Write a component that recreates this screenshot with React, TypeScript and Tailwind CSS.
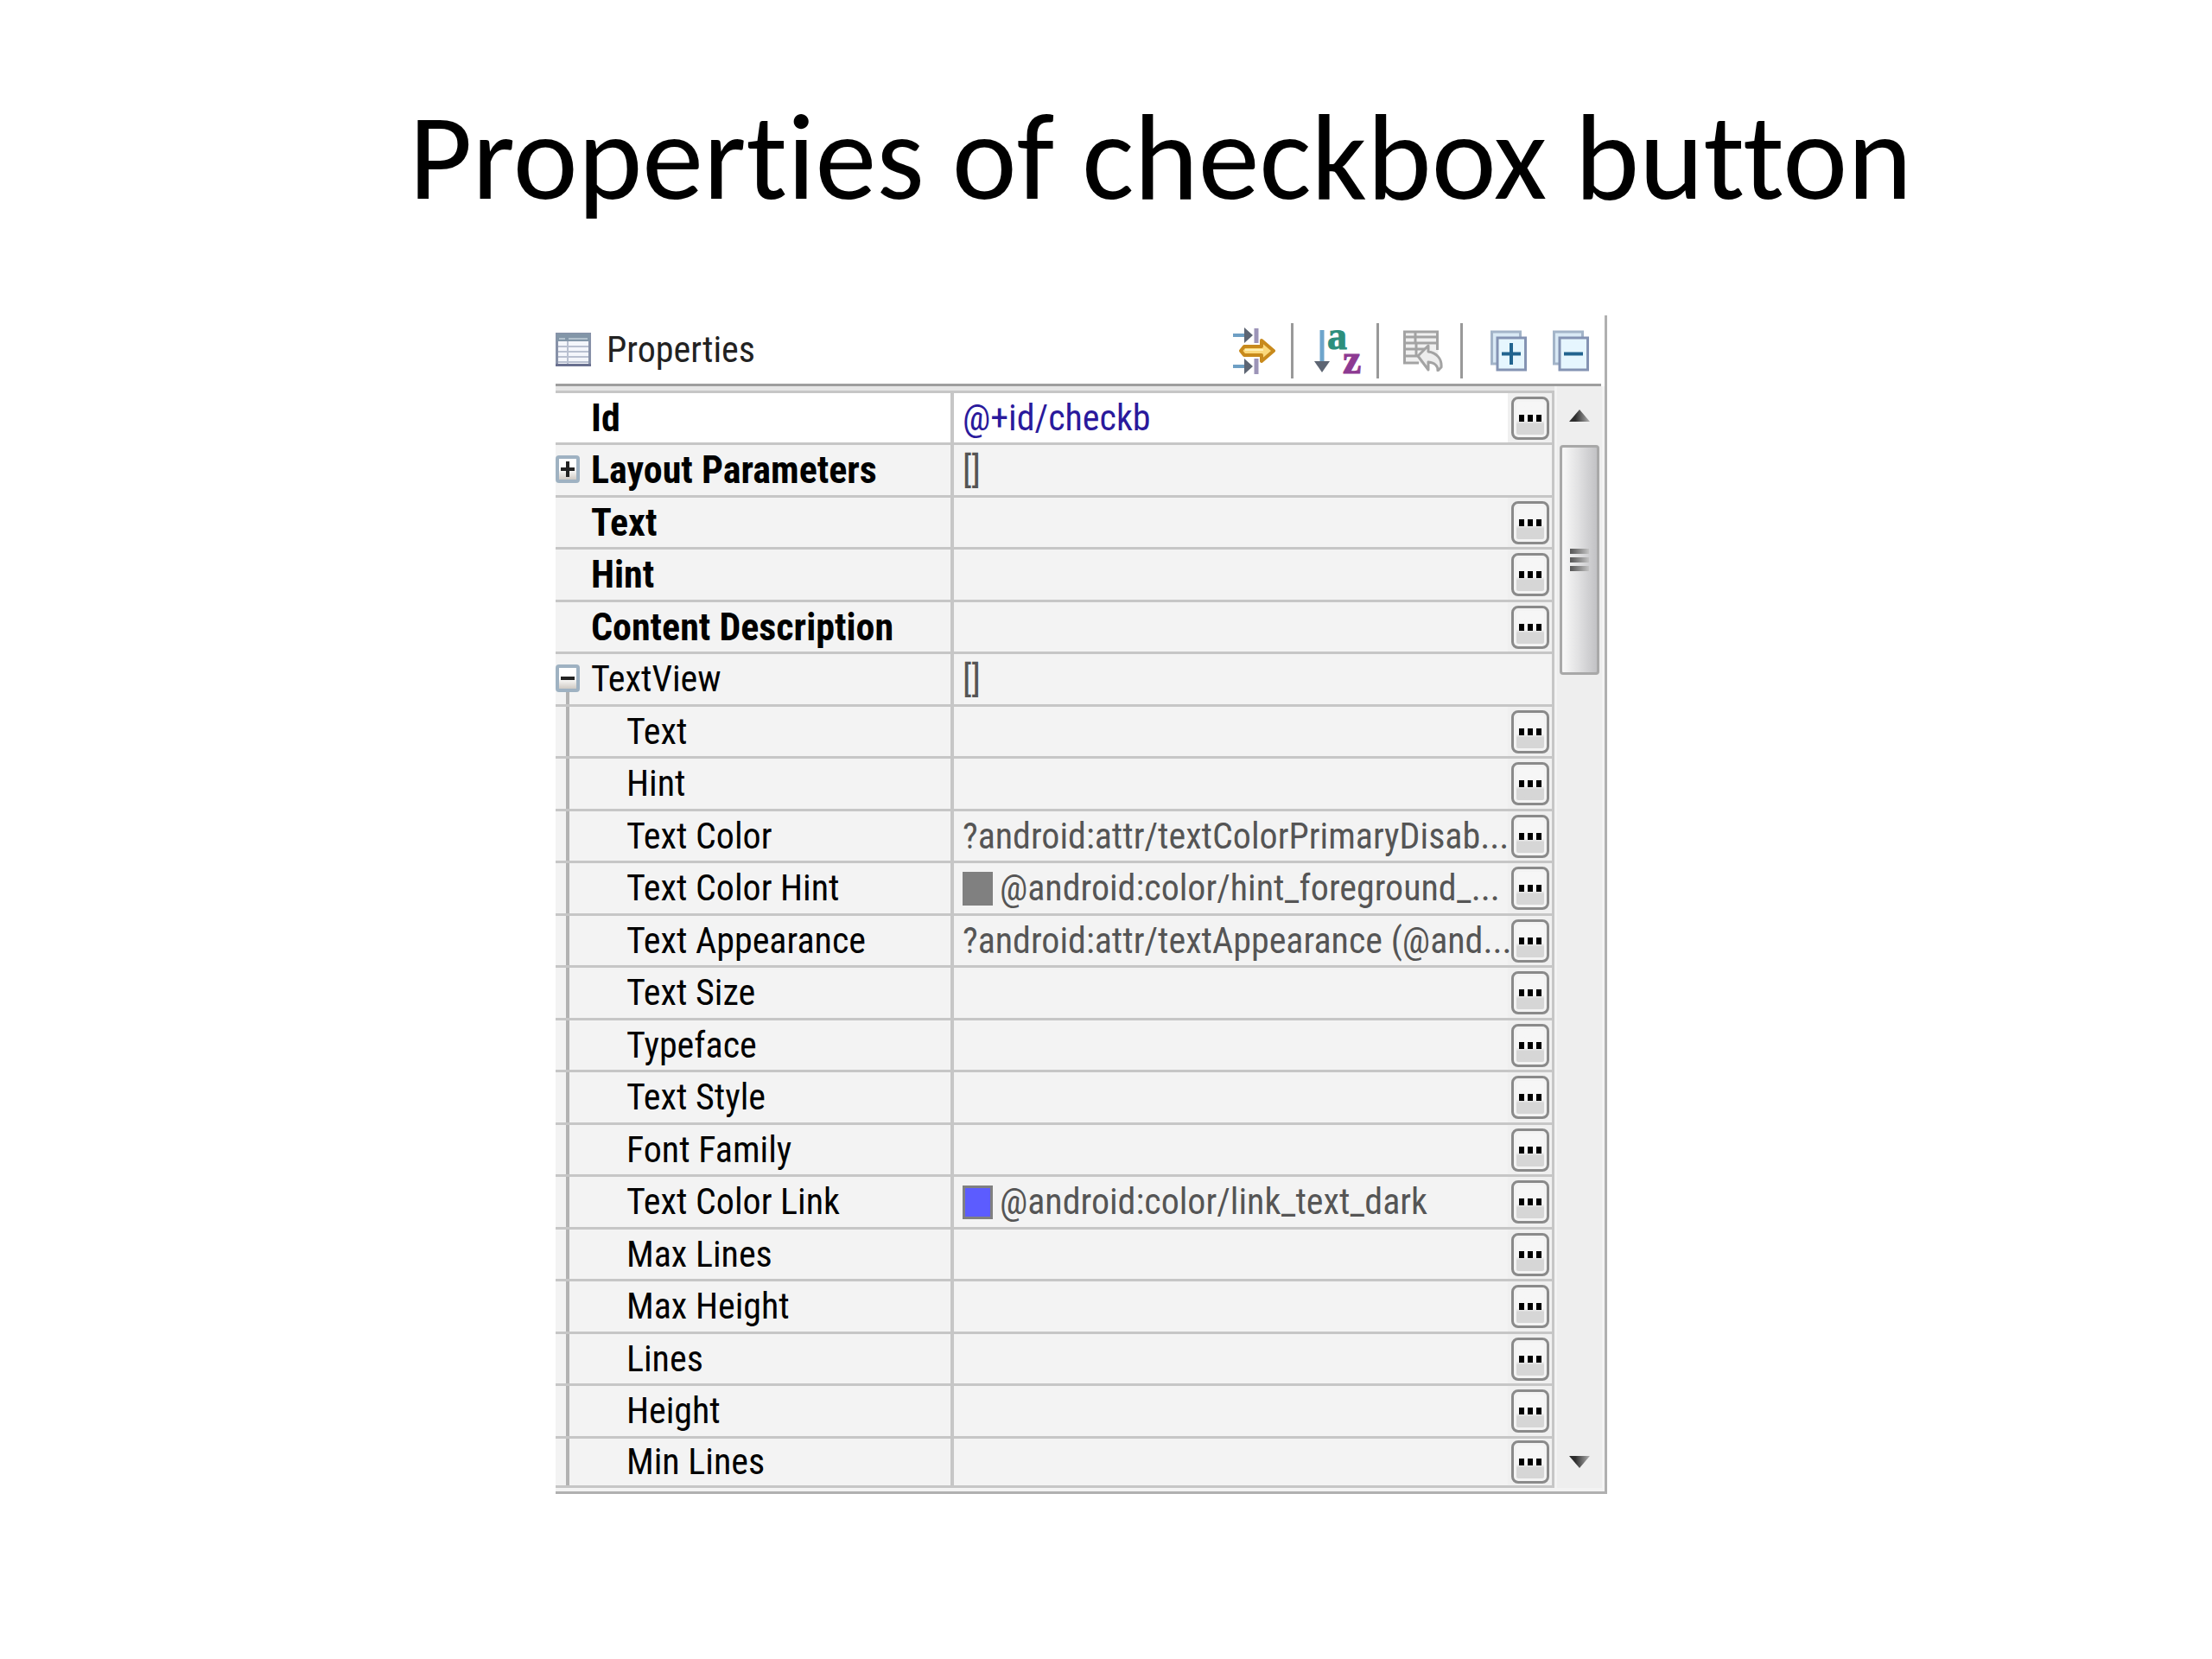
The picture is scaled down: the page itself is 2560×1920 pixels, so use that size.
import React, { useState } from 'react';

interface Property {
    name: string;
    value?: string;
    level?: number;
    bold?: boolean;
    swatch?: 'gray' | 'blue';
    edited?: boolean;
    expand?: 'plus' | 'minus';
}

const properties: Property[] = [
    { name: 'Id', value: '@+id/checkb', bold: true, edited: true },
    { name: 'Layout Parameters', value: '[]', bold: true, expand: 'plus' },
    { name: 'Text', bold: true },
    { name: 'Hint', bold: true },
    { name: 'Content Description', bold: true },
    { name: 'TextView', value: '[]', expand: 'minus' },
    { name: 'Text', level: 1 },
    { name: 'Hint', level: 1 },
    { name: 'Text Color', level: 1, value: '?android:attr/textColorPrimaryDisab...' },
    { name: 'Text Color Hint', level: 1, value: '@android:color/hint_foreground_...', swatch: 'gray' },
    { name: 'Text Appearance', level: 1, value: '?android:attr/textAppearance (@and...' },
    { name: 'Text Size', level: 1 },
    { name: 'Typeface', level: 1 },
    { name: 'Text Style', level: 1 },
    { name: 'Font Family', level: 1 },
    { name: 'Text Color Link', level: 1, value: '@android:color/link_text_dark', swatch: 'blue' },
    { name: 'Max Lines', level: 1 },
    { name: 'Max Height', level: 1 },
    { name: 'Lines', level: 1 },
    { name: 'Height', level: 1 },
    { name: 'Min Lines', level: 1 },
];

const TableIcon = () => (
    <svg width="41" height="39" viewBox="0 0 41 39" aria-hidden="true">
        <rect x="1.5" y="1.5" width="38" height="36" fill="#f4f6fb" stroke="#8791a8" strokeWidth="3" />
        <rect x="1" y="1" width="39" height="9" fill="#8396a8" />
        <path d="M4 7h7M15 7h22" stroke="#b4c2ce" strokeWidth="2" />
        <path d="M3 16h35M3 22h35M3 28h35M3 34h35" stroke="#b9c0d0" strokeWidth="2" />
        <path d="M14 10v26" stroke="#b9c0d0" strokeWidth="2" />
        <path d="M0 37.5h41" stroke="#69708f" strokeWidth="3" />
    </svg>
);

const FilterIcon = () => (
    <svg width="50" height="54" viewBox="0 0 50 54" aria-hidden="true">
        <path d="M1 9h14M1 45h14" stroke="#6e9fc4" strokeWidth="4" />
        <path d="M14 0l10 9-10 9zM14 36l10 9-10 9z" fill="#5d6573" />
        <path d="M28 1v17M28 36v18" stroke="#9c94b8" strokeWidth="5" />
        <path d="M14 22h20v-7l14 12-14 12v-7H14l-4-5z" fill="#fbd97c" stroke="#c88a1c" strokeWidth="4" strokeLinejoin="round" />
        <path d="M15 26h21" stroke="#fff0b5" strokeWidth="2" />
    </svg>
);

const SortIcon = () => (
    <svg width="54" height="56" viewBox="0 0 54 56" className="overflow-visible" aria-hidden="true">
        <path d="M9 4v38" stroke="#6ea5cc" strokeWidth="5" />
        <path d="M0 40h18l-9 13z" fill="#5d6573" />
        <text x="15" y="26" fontSize="46" className="font-['Liberation_Serif',serif] font-bold" fill="#2c8f7c" stroke="#2c8f7c">a</text>
        <text x="33" y="54" fontSize="48" className="font-['Liberation_Serif',serif] font-bold" fill="#8d3a92" stroke="#8d3a92">z</text>
    </svg>
);

const RestoreIcon = () => (
    <svg width="46" height="48" viewBox="0 0 46 48" aria-hidden="true">
        <rect x="1.5" y="2.5" width="39" height="36" fill="#f0f0f0" />
        <path d="M0 2h41M1.5 1v38M39.5 1v22M0 8h41M0 15h41M2 22h28M2 30h16M0 38h18M14 2v13M15 15v14" stroke="#a3a3a3" strokeWidth="3" fill="none" />
        <path d="M17 30l12-12v7c9 1 16 8 15 18l-4 4c0-6-3-9-11-10v9z" fill="#ededed" stroke="#a3a3a3" strokeWidth="3" strokeLinejoin="round" />
    </svg>
);

const StackIcon: React.FC<{ plus?: boolean }> = ({ plus }) => (
    <svg width="42" height="48" viewBox="0 0 42 48" aria-hidden="true">
        <rect x="1.5" y="2" width="33" height="37" fill="#d9e9f5" stroke="#a3b4c8" strokeWidth="3" />
        <rect x="8" y="9" width="32.5" height="37" fill="#e6f6fe" stroke="#8493b3" strokeWidth="3" />
        <path d="M13 27.5h22" stroke="#22648f" strokeWidth="4" />
        {plus && <path d="M24 15v25" stroke="#22648f" strokeWidth="4" />}
    </svg>
);

const ArrowIcon: React.FC<{ down?: boolean }> = ({ down }) => (
    <svg width="24" height="14" viewBox="0 0 24 14" aria-hidden="true">
        <defs>
            <linearGradient id="arrow" x1="0" x2="1">
                <stop offset="0.3" stopColor="#2d2d2d" />
                <stop offset="1" stopColor="#b4b4b4" />
            </linearGradient>
        </defs>
        <path d={down ? 'M0 0h24L12 14z' : 'M0 14h24L12 0z'} fill="url(#arrow)" />
    </svg>
);

const Separator = () => <span className="w-[3px] h-16 bg-[#999999]" />;

const Expander: React.FC<{ kind: 'plus' | 'minus' }> = ({ kind }) => {
    const [open, setOpen] = useState(kind === 'minus');
    return (
        <button
            type="button"
            aria-label="Toggle group"
            aria-expanded={open}
            onClick={() => setOpen(!open)}
            className="block w-7 h-8 rounded-sm border-4 border-[#9fb2c2] bg-linear-to-b from-white from-50% to-[#cfcac4]"
        >
            <svg width="20" height="24" viewBox="0 0 20 24" aria-hidden="true">
                <path d="M2 12h16" stroke="#222222" strokeWidth="4" />
                {!open && <path d="M10 3v18" stroke="#222222" strokeWidth="4" />}
            </svg>
        </button>
    );
};

const PropertyRow: React.FC<{ item: Property }> = ({ item }) => {
    const line = 'border-b-3 border-[#c6c6c6]';
    return (
        <tr className={`h-[60px] even:h-[61px] last:h-[57px] ${item.edited ? 'bg-white' : 'bg-[#f3f3f3]'}`}>
            <td className={`w-7 h-[inherit] p-0 ${line}`}>
                <div className="h-full flex flex-col items-center">
                    {item.expand && (
                        <>
                            <span className="h-3" />
                            <Expander kind={item.expand} />
                        </>
                    )}
                    {(item.level || item.expand === 'minus') && <span className="flex-1 w-1 bg-[#b2b2b2]" />}
                </div>
            </td>
            <th
                scope="row"
                className={`p-0 text-left whitespace-nowrap text-black ${line} ${item.level ? 'pl-[54px]' : 'pl-[13px]'} ${item.bold ? 'font-bold text-[44px]' : 'font-normal'}`}
            >
                {item.name}
            </th>
            <td className={`p-0 pl-2.5 border-l-4 whitespace-nowrap ${line} ${item.edited ? 'text-[#2a1a9c]' : 'text-[#555555]'}`}>
                <div className="flex items-center gap-2">
                    {item.swatch === 'gray' && <span className="w-[35px] h-[39px] bg-[#808080]" />}
                    {item.swatch === 'blue' && <span className="w-[35px] h-[39px] bg-[#5c5cff] border-3 border-[#808080]" />}
                    <span>{item.value}</span>
                </div>
            </td>
            <td className={`w-[51px] p-0 ${line} ${item.expand ? '' : 'bg-[#f0f0f0]'}`}>
                {!item.expand && (
                    <button
                        type="button"
                        aria-label={`Edit ${item.name}`}
                        className="mx-auto flex w-11 h-[50px] items-center justify-center gap-1 rounded-lg border-3 border-[#8a8a8a] bg-linear-to-b from-[#f6f6f6] from-55% to-[#d6d6d6] to-65% ring-3 ring-inset ring-[#f3f3f3]"
                    >
                        <span className="w-1.5 h-2 bg-black" />
                        <span className="w-1.5 h-2 bg-black" />
                        <span className="w-1.5 h-2 bg-black" />
                    </button>
                )}
            </td>
        </tr>
    );
};

const ScrollBar = () => (
    <div className="w-[58px] flex flex-col items-center bg-[#eeeeee] border-x-3 border-[#f3f3f3]">
        <button type="button" aria-label="Scroll up" className="h-[68px] w-full flex items-center justify-center">
            <ArrowIcon />
        </button>
        <div className="w-[46px] h-[266px] rounded-sm border-3 border-[#a8a8a8] bg-linear-to-r from-[#f6f6f6] from-5% via-[#e2e2e3] via-45% to-[#c2c2c5] flex flex-col items-center justify-center gap-1">
            <span className="w-[22px] h-1.5 bg-linear-to-r from-[#555555] to-[#c4c4c4]" />
            <span className="w-[22px] h-1.5 bg-linear-to-r from-[#555555] to-[#c4c4c4]" />
            <span className="w-[22px] h-1.5 bg-linear-to-r from-[#555555] to-[#c4c4c4]" />
        </div>
        <button type="button" aria-label="Scroll down" className="mt-auto h-[60px] w-full flex items-center justify-center">
            <ArrowIcon down />
        </button>
    </div>
);

const App: React.FC = () => {
    return (
        <main className="min-h-screen bg-white">
            <h1 className="pt-[97px] pl-[126px] h-[365px] text-center text-[142px] leading-[170px] text-black font-['Carlito','Lato',sans-serif] [font-variant-ligatures:none]">
                Properties of checkbox button
            </h1>

            <section className="ml-[643px] mr-[700px] border-r-3 border-b-3 border-[#b0b0b0] text-[42px] leading-[48px] font-['Roboto_Condensed','Roboto',sans-serif]">
                <header className="h-[82px] mr-1 flex items-center border-b-3 border-[#9e9e9e]">
                    <TableIcon />
                    <h2 className="ml-[18px] text-[#222222]">Properties</h2>
                    <div className="ml-auto mr-3.5 pt-0.5 flex items-center">
                        <button type="button" aria-label="Show categories"><FilterIcon /></button>
                        <span className="w-[18px]" />
                        <Separator />
                        <span className="w-6" />
                        <button type="button" aria-label="Sort alphabetically"><SortIcon /></button>
                        <span className="w-[18px]" />
                        <Separator />
                        <span className="w-7" />
                        <button type="button" aria-label="Restore default value"><RestoreIcon /></button>
                        <span className="w-5" />
                        <Separator />
                        <span className="w-8" />
                        <button type="button" aria-label="Expand all"><StackIcon plus /></button>
                        <span className="w-[30px]" />
                        <button type="button" aria-label="Collapse all"><StackIcon /></button>
                    </div>
                </header>

                <div className="flex pb-1 bg-[#f3f3f3]">
                    <div className="flex-1 pt-[5px] bg-[#e6e6e6]">
                        <table className="w-full table-fixed border-separate border-spacing-0 border-t-3 border-r-3 border-[#c6c6c6]">
                            <colgroup>
                                <col className="w-7" />
                                <col className="w-[37.2%]" />
                                <col />
                                <col className="w-[51px]" />
                            </colgroup>
                            <tbody>
                                {properties.map((item, index) => (
                                    <PropertyRow key={index} item={item} />
                                ))}
                            </tbody>
                        </table>
                    </div>
                    <ScrollBar />
                </div>
            </section>
        </main>
    );
};

export default App;
